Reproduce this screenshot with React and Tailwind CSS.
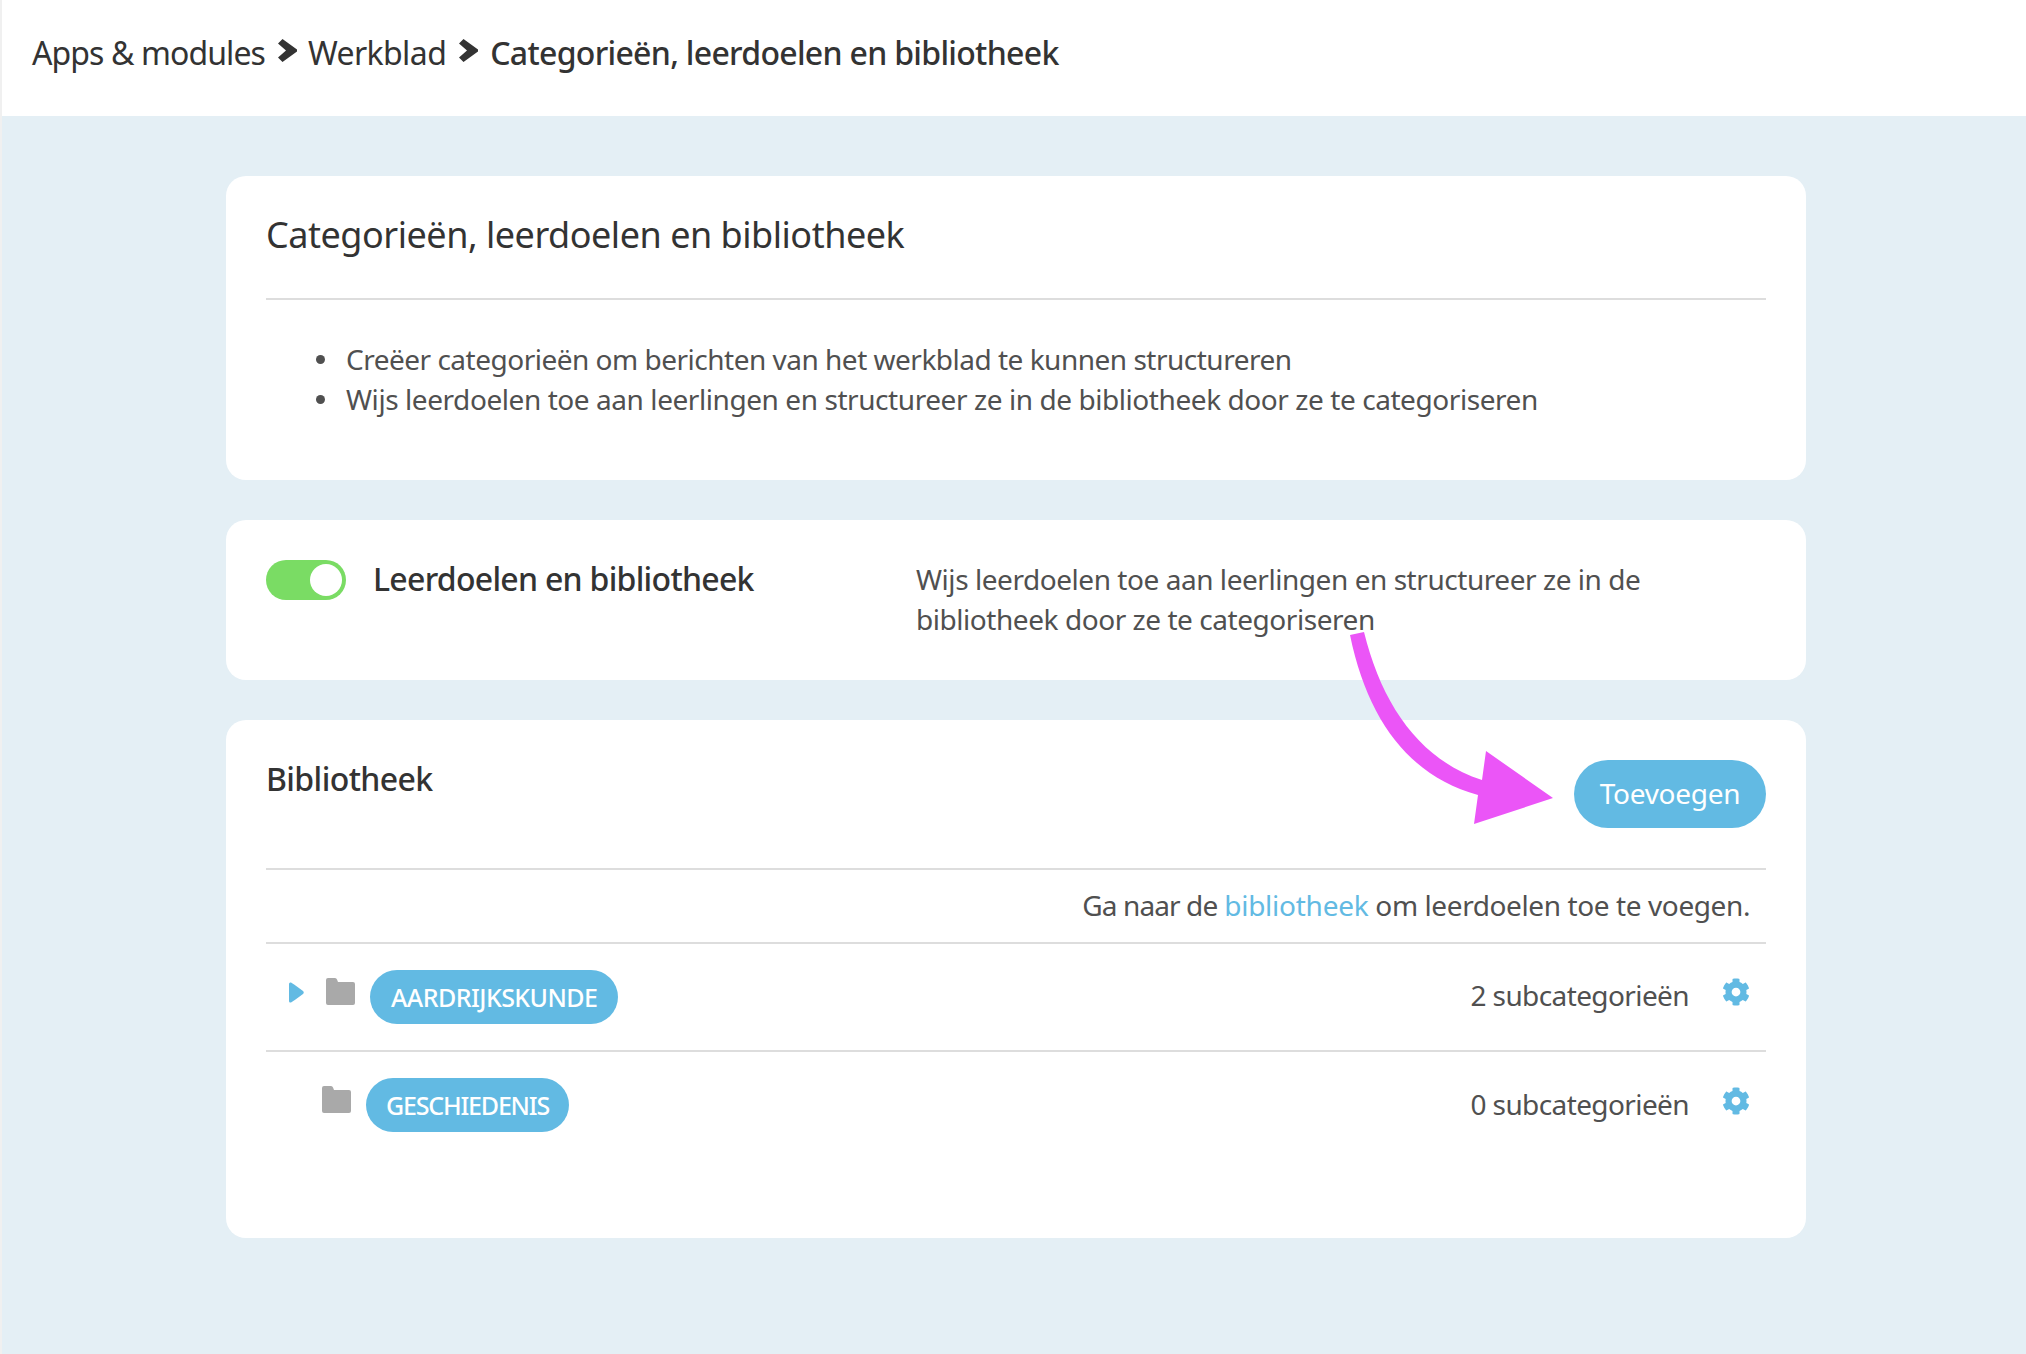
import { FaCog } from "react-icons/fa"

const categories = [
  { id: 1, name: "AARDRIJKSKUNDE", count: 2, expandable: true, rowClass: "h-[108px]", pillClass: "px-[21px] tracking-[-0.55px]" },
  { id: 2, name: "GESCHIEDENIS", count: 0, expandable: false, rowClass: "h-[107px]", pillClass: "-translate-y-[1px] px-[20px] tracking-[-1.2px]" },
]

const hints = [
  { id: 1, text: "Creëer categorieën om berichten van het werkblad te kunnen structureren", className: "tracking-[-0.5px]" },
  { id: 2, text: "Wijs leerdoelen toe aan leerlingen en structureer ze in de bibliotheek door ze te categoriseren", className: "tracking-[-0.43px]" },
]

function Chevron({ className }) {
  return (
    <svg viewBox="0 0 19 23" className={`h-[23px] w-[19px] shrink-0 -translate-y-[3px] fill-[#333333] ${className}`}>
      <path d="M0 4.5 L4.5 0 L19 10.5 V12.5 L4.5 23 L0 18.5 L8 11.5 Z" />
    </svg>
  )
}

function Folder() {
  return (
    <svg viewBox="0 0 29 27" className="mr-[15px] h-[27px] w-[29px] -translate-y-[6px] fill-[#a9a9a9]">
      <path d="M2 0 H9 Q10.5 0 11 1.5 L12 4 H27 Q29 4 29 6 V25 Q29 27 27 27 H2 Q0 27 0 25 V2 Q0 0 2 0 Z" />
    </svg>
  )
}

function Arrow() {
  return (
    <svg viewBox="0 0 2026 1354" className="pointer-events-none absolute top-0 -left-[2px] h-[1354px] w-[2026px] fill-[#eb55f7]">
      <path d="M1350 635 L1364 632 C1382 705 1420 760 1482 780 L1486 751 L1553 798 L1474 824 L1478 795 C1410 776 1368 722 1350 635 Z" />
    </svg>
  )
}

export default function App() {
  return (
    <div className="relative min-h-screen overflow-hidden border-l-2 border-[#f0f0f0] bg-[#e4eff5] font-['Noto_Sans',sans-serif] text-[28px] leading-[40px] tracking-[-0.45px] text-[#505050]">
      <header className="flex h-[116px] items-center bg-white pb-[10px] pl-[30px] text-[32px] tracking-[-0.6px] text-[#333333]">
        <span className="tracking-[-0.9px]">Apps &amp; modules</span>
        <Chevron className="mr-[11px] ml-[13px]" />
        <span>Werkblad</span>
        <Chevron className="mr-[12px] ml-[13px]" />
        <span className="font-medium tracking-[-0.7px]">Categorieën, leerdoelen en bibliotheek</span>
      </header>

      <main className="mt-[60px] mr-[220px] ml-[224px] flex flex-col gap-[40px]">
        <section className="h-[304px] rounded-[20px] bg-white px-[40px] pt-[37px]">
          <h1 className="border-b-2 border-[#dddddd] pb-[41px] text-[36px] leading-[44px] tracking-[-0.48px] text-[#333333]">
            Categorieën, leerdoelen en bibliotheek
          </h1>
          <ul className="mt-[39px] pl-[50px]">
            {hints.map((hint) => (
              <li key={hint.id} className={`flex items-center ${hint.className}`}>
                <span className="mr-[21px] h-[9px] w-[9px] shrink-0 rounded-full bg-[#505050]" />
                {hint.text}
              </li>
            ))}
          </ul>
        </section>

        <section className="flex h-[160px] rounded-[20px] bg-white px-[40px] pt-[40px]">
          <div className="flex w-[650px] items-start">
            <div className="flex h-[40px] w-[80px] justify-end rounded-full bg-[#7adc64] p-[4px]">
              <div className="h-[32px] w-[32px] rounded-full bg-white" />
            </div>
            <h2 className="ml-[27px] -translate-y-[1px] text-[32px] leading-[40px] font-medium tracking-[-0.72px] text-[#333333]">
              Leerdoelen en bibliotheek
            </h2>
          </div>
          <p className="w-[800px] -translate-y-[1px]">
            Wijs leerdoelen toe aan leerlingen en structureer ze in de bibliotheek door ze te categoriseren
          </p>
        </section>

        <section className="h-[518px] rounded-[20px] bg-white px-[40px] pt-[40px]">
          <div className="flex items-start justify-between border-b-2 border-[#dddddd] pb-[40px]">
            <h2 className="-translate-y-[1px] text-[32px] leading-[40px] font-medium tracking-[-0.6px] text-[#333333]">Bibliotheek</h2>
            <button className="h-[68px] w-[192px] rounded-full bg-[#62bae3] pb-[2px] tracking-[-0.3px] text-white">Toevoegen</button>
          </div>
          <p className="border-b-2 border-[#dddddd] pt-[15px] pr-[16px] pb-[17px] text-right tracking-[-0.4px]">
            <span className="tracking-[-0.9px]">Ga naar de</span> <a className="tracking-[-0.25px] text-[#62bae3]">bibliotheek</a> om leerdoelen toe te voegen.
          </p>
          {categories.map((cat) => (
            <div key={cat.id} className={`flex items-center border-b-2 border-[#dddddd] pr-[16px] last:border-b-0 ${cat.rowClass}`}>
              <div className={`flex items-center ${cat.expandable ? "pl-[23px]" : "pl-[56px]"}`}>
                {cat.expandable && (
                  <svg viewBox="0 0 15 21" className="mr-[22px] h-[21px] w-[15px] -translate-y-[5px] fill-[#62bae3]">
                    <path d="M0 2 Q0 0 2 0.5 Q3 0.8 14 9 Q15.5 10.5 14 12 Q3 20.2 2 20.5 Q0 21 0 19 Z" />
                  </svg>
                )}
                <Folder />
                <span className={`flex h-[54px] items-center rounded-full bg-[#62bae3] text-[25px] font-medium text-white ${cat.pillClass}`}>
                  {cat.name}
                </span>
              </div>
              <span className="ml-auto -translate-y-[2px] tracking-[-0.6px]">{cat.count} subcategorieën</span>
              <FaCog className="ml-[33px] h-[28px] w-[28px] -translate-y-[5px] text-[#62bae3]" />
            </div>
          ))}
        </section>
      </main>

      <Arrow />
    </div>
  )
}
